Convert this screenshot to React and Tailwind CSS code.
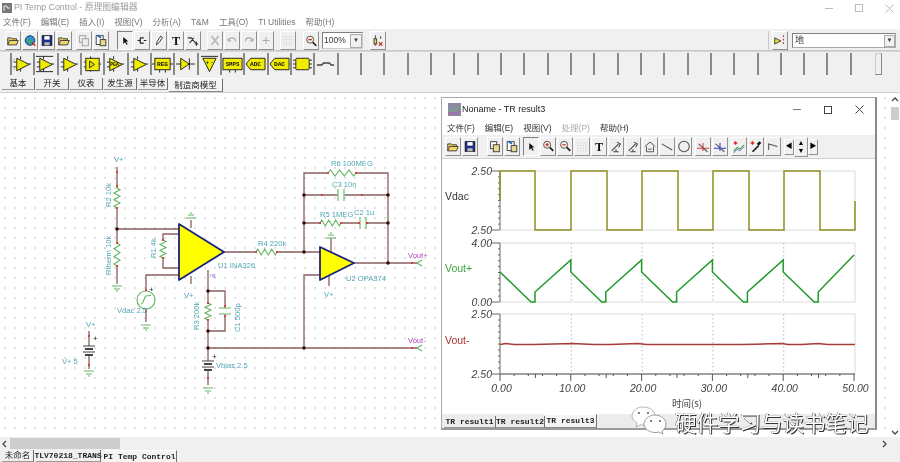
import React from 'react';

const FONT = '"Liberation Sans", "Noto Sans CJK SC", sans-serif';
const MONO = '"Liberation Mono", "Noto Sans CJK SC", monospace';

const MENU = ['文件(F)', '编辑(E)', '插入(I)', '视图(V)', '分析(A)', 'T&M', '工具(O)', 'TI Utilities', '帮助(H)'];
const PLOT_MENU = [['文件(F)', true], ['编辑(E)', true], ['视图(V)', true], ['处理(P)', false], ['帮助(H)', true]];
const PARTS = ['amp', 'diff', 'amp', 'box', 'pga', 'amp', 'reg', 'diode', 'tri', 'smps', 'adc', 'dac', 'chip', 'line'];
const PART_TEXT = { reg: 'REG', smps: 'SMPS', adc: 'ADC', dac: 'DAC', pga: 'PGA' };

function Glyph({ name }) {
  switch (name) {
    case 'open':
      return (<g stroke="#333" strokeWidth="1"><path d="M2 13V5h4l1 1h5v2" fill="#e8c85a" /><path d="M2 13l2-5h10l-2 5z" fill="#f0d668" /></g>);
    case 'globe':
      return (<g><circle cx="8" cy="8" r="5.5" fill="#2f8fd8" stroke="#135" /><path d="M4 5c3 0 3 3 5 3s1 4-1 5" fill="#3fae4a" /><path d="M10 10l4 4" stroke="#c33" strokeWidth="2" /></g>);
    case 'save':
      return (<g><rect x="2.5" y="2.5" width="11" height="11" fill="#1d2f8f" stroke="#111" /><rect x="5" y="3" width="6" height="4" fill="#fff" /><rect x="5" y="10" width="6" height="3.5" fill="#bbb" /></g>);
    case 'copy':
      return (<g stroke="#999" fill="#eee"><rect x="3" y="2.5" width="7" height="8" /><rect x="6" y="6" width="7" height="8" /></g>);
    case 'copyOn':
      return (<g stroke="#333"><rect x="3" y="2.5" width="7" height="8" fill="#fff" /><rect x="6" y="6" width="7" height="8" fill="#e8d890" /></g>);
    case 'paste':
      return (<g stroke="#333"><rect x="2.5" y="2.5" width="8" height="10" fill="#fff" /><rect x="7" y="7" width="6.5" height="7" fill="#e8d890" /><path d="M4 2l4 3" stroke="#16c" strokeWidth="2" /></g>);
    case 'arrow':
      return <path d="M6 4l0 8 2-2 2 3 1-1-2-3h3z" fill="#111" />;
    case 'wire':
      return <path d="M3 8h3M6 5v6M6 5h4M6 11h4M10 8h3" stroke="#222" strokeWidth="1.4" fill="none" />;
    case 'pencil':
      return <path d="M5 13l1-4 4-6 2 1.500-4 6z" fill="#fff" stroke="#222" />;
    case 'T':
      return <text x="8" y="13" textAnchor="middle" fontFamily='"Liberation Serif", serif' fontWeight="700" fontSize="14" fill="#111">T</text>;
    case 'part':
      return <path d="M2 5h4l5 6M9 5l-5 6M12 9v5M10 12h4" stroke="#333" strokeWidth="1.200" fill="none" />;
    case 'x':
      return <path d="M4 3l8 10M12 3L4 13" stroke="#bbb" strokeWidth="2" fill="none" />;
    case 'undo':
      return <path d="M4 9a4 4 0 018 0M4 9l-1-3M4 9l3-1" stroke="#aaa" strokeWidth="1.200" fill="none" />;
    case 'redo':
      return <path d="M4 9a4 4 0 018 0M12 9l1-3M12 9l-3-1" stroke="#aaa" strokeWidth="1.200" fill="none" />;
    case 'plus':
      return <path d="M8 4v8M4 8h8" stroke="#aaa" strokeWidth="1.200" />;
    case 'grid':
      return <path d="M3 4h10M3 7h10M3 10h10M3 13h10" stroke="#bbb" strokeWidth="1" strokeDasharray="1 2" />;
    case 'zoom':
      return (<g><circle cx="7" cy="7" r="4" fill="#f6f0e0" stroke="#444" /><path d="M5 7h4" stroke="#c22" strokeWidth="1.500" /><path d="M10 10l4 4" stroke="#222" strokeWidth="2" /></g>);
    case 'zoomIn':
      return (<g><circle cx="7" cy="6" r="4" fill="#f6f0e0" stroke="#444" /><path d="M5 6h4M7 4v4" stroke="#c22" strokeWidth="1.300" /><path d="M10 9l4 4" stroke="#222" strokeWidth="2" /></g>);
    case 'zoomOut':
      return (<g><circle cx="7" cy="6" r="4" fill="#f6f0e0" stroke="#444" /><path d="M5 6h4" stroke="#c22" strokeWidth="1.300" /><path d="M10 9l4 4" stroke="#222" strokeWidth="2" /></g>);
    case 'probe':
      return (<g stroke="#333" fill="none"><path d="M5 2v12M11 3v3" /><rect x="3.500" y="6" width="3" height="6" fill="#e8d44a" /><path d="M9 10l4 4M13 10l-4 4" stroke="#c33" strokeWidth="1.300" /></g>);
    case 'port':
      return (<g stroke="#333"><path d="M2 5l7 3.500-7 3.500z" fill="#dfe020" /><path d="M12 2v12" stroke="#c33" strokeWidth="1.400" strokeDasharray="2 2" /></g>);
    case 'cursorPlot':
      return <path d="M3 13l8-8M9 3l4 2-2 4M5 14h6M8 11v3" stroke="#444" strokeWidth="1.200" fill="none" />;
    case 'house':
      return <path d="M2 8l6-5 6 5M4 8v6h8V8M6 11h4" stroke="#444" strokeWidth="1" fill="none" />;
    case 'slash':
      return <path d="M2 5l12 7" stroke="#555" strokeWidth="1.200" />;
    case 'circle':
      return <circle cx="8" cy="8" r="6" stroke="#555" strokeWidth="1.200" fill="none" />;
    case 'cursorA':
      return (<g strokeWidth="1.200" fill="none"><path d="M1 10h14M8 4v9" stroke="#e33" /><path d="M3 5l10 9" stroke="#555" /></g>);
    case 'cursorB':
      return (<g strokeWidth="1.200" fill="none"><path d="M1 10h14M8 4v9" stroke="#33d" /><path d="M3 5l10 9" stroke="#555" /></g>);
    case 'traces':
      return (<g fill="none" strokeWidth="1.200"><path d="M2 4h4M4 2v4" stroke="#d22" strokeWidth="1.600" /><path d="M2 13l4-4 3 2 5-5" stroke="#3a3" /><path d="M2 15l4-4 3 2 5-5" stroke="#88d" /></g>);
    case 'dropper':
      return (<g fill="none"><path d="M2 4h4M4 2v4" stroke="#d22" strokeWidth="1.600" /><path d="M4 14l7-7" stroke="#222" strokeWidth="2" /><path d="M10 6l3-3" stroke="#111" strokeWidth="3" /></g>);
    case 'corner':
      return <path d="M3 12V5l10 3" stroke="#555" strokeWidth="1.200" fill="none" />;
    default:
      return null;
  }
}

function Btn({ icon, className = '', pressed = false }) {
  const edge = pressed
    ? 'border-t-[#808080] border-l-[#808080] border-r-white border-b-white'
    : 'border-t-white border-l-white border-r-[#909090] border-b-[#909090]';
  return (
    <div className={`w-[16px] h-[19px] shrink-0 flex items-center justify-center border bg-[#f0f0f0] ${edge} ${className}`}>
      <svg width="15" height="15" viewBox="0 0 16 16"><Glyph name={icon} /></svg>
    </div>
  );
}

function Part({ kind }) {
  const text = PART_TEXT[kind];
  const pins = <path d="M2 8h3M2 13h3M17 10h3M9 2v3M9 15v3" stroke="#222" strokeWidth="1" />;
  return (
    <svg width="21" height="20" viewBox="0 0 22 20">
      {(kind === 'amp' || kind === 'pga' || kind === 'diff') && (
        <g>{pins}<path d="M5 4l13 6.500L5 17z" fill="#f2ec00" stroke="#222" /></g>
      )}
      {kind === 'diff' && <path d="M1 2h18M1 18h18" stroke="#222" />}
      {kind === 'box' && (
        <g>{pins}<rect x="4" y="4" width="14" height="13" fill="#f2ec00" stroke="#222" /><path d="M8 7l5 3.500-5 3.500z" fill="none" stroke="#222" /></g>
      )}
      {kind === 'diode' && (
        <g><path d="M1 10h20" stroke="#222" /><path d="M6 4l9 6-9 6z" fill="#f2ec00" stroke="#222" /><path d="M15 4v12" stroke="#222" /></g>
      )}
      {kind === 'tri' && (
        <g><path d="M2 2h18" stroke="#222" /><path d="M4 4h14l-7 14z" fill="#f2ec00" stroke="#222" /></g>
      )}
      {kind === 'reg' && (
        <g><path d="M0 10h3M19 10h3M8 16v3M14 16v3" stroke="#222" /><rect x="3" y="4" width="16" height="12" fill="#f2ec00" stroke="#222" /></g>
      )}
      {kind === 'smps' && (
        <g><path d="M8 16v3M14 16v3" stroke="#222" /><rect x="1" y="4" width="20" height="12" fill="#f2ec00" stroke="#222" /></g>
      )}
      {(kind === 'adc' || kind === 'dac') && (
        <g><path d="M1 10l5-6h15v12H6z" fill="#f2ec00" stroke="#222" /></g>
      )}
      {kind === 'chip' && (
        <g><path d="M1 6h3M1 10h3M1 14h3M18 6h3M18 10h3M18 14h3" stroke="#222" /><rect x="4" y="4" width="14" height="12" rx="1" fill="#f2ec00" stroke="#222" /></g>
      )}
      {kind === 'line' && <path d="M2 11h5l2-2h6l2 2h3" stroke="#444" strokeWidth="1.500" fill="none" />}
      {text && (
        <text x={kind === 'pga' ? 10 : 11} y="12.500" textAnchor="middle" fontFamily='"Liberation Mono", monospace' fontWeight="700" fontSize={kind === 'smps' ? 6 : kind === 'pga' ? 5 : 6.500} fill="#111">{text}</text>
      )}
      {kind === 'tri' && <text x="11" y="10" textAnchor="middle" fontSize="6" fontWeight="700" fill="#111" fontFamily='"Liberation Sans", sans-serif'>+ -</text>}
    </svg>
  );
}

function Tab({ label, width, active = false, mono = false }) {
  return (
    <div
      style={{ fontFamily: mono ? MONO : FONT, width }}
      className={`shrink-0 flex items-center justify-center whitespace-nowrap text-[#222] border-r border-r-[#707070] ${mono ? 'text-[8px] font-bold' : 'text-[8.5px]'} ${active ? 'h-[14px] border-t border-t-white bg-[#f4f4f4] border-b border-b-[#888]' : 'h-[12px] border-b border-b-[#999]'}`}
    >
      {label}
    </div>
  );
}

// schematic helpers
const WIRE = '#8a5f5f';
const COMP = '#62b562';
const LABEL = '#4fa6b4';

function zigV(x, y, len) {
  const n = 6;
  const step = len / n;
  let d = `M${x} ${y}`;
  for (let i = 0; i < n; i++) d += `L${x + (i % 2 ? -3 : 3)} ${y + step * (i + 0.5)}`;
  return `${d}L${x} ${y + len}`;
}

function zigH(x, y, len) {
  const n = 6;
  const step = len / n;
  let d = `M${x} ${y}`;
  for (let i = 0; i < n; i++) d += `L${x + step * (i + 0.5)} ${y + (i % 2 ? 3 : -3)}`;
  return `${d}L${x + len} ${y}`;
}

const WIRES = [
  'M117 167V188M117 208V243M117 266V284',
  'M117 229H179M179 234H163V240M163 258V268H179',
  'M179 275H146V291M146 309V322',
  'M224 252H256M277 252H320',
  'M191 228V220M191 276V284',
  'M208 270V303M208 320V361M208 291H225V306M225 316V331H208M208 331',
  'M208 348H417M304 348V275H320',
  'M304 252V173H328M356 173H388V263',
  'M304 195H337M345 195H388',
  'M304 223H320M341 223H359M367 223H388',
  'M354 263H417',
  'M331 238V252M329 276V286',
  'M208 371V385',
  'M89 331V346M89 355V369',
];
const JOINTS = [[117, 229], [208, 291], [208, 331], [208, 348], [304, 348], [304, 252], [304, 195], [388, 195], [304, 223], [388, 223], [388, 263]];
const GROUNDS = [[117, 286], [191, 218, true], [146, 325], [208, 388], [89, 371], [331, 238, true]];
const PINS = [[117, 172], [117, 186], [117, 208], [117, 243], [117, 266], [163, 240], [163, 258], [146, 290], [146, 311], [208, 303], [208, 320], [225, 306], [225, 316], [89, 336], [89, 365], [208, 378], [256, 252], [277, 252], [328, 173], [356, 173], [320, 223], [341, 223], [359, 223], [367, 223], [322, 195], [362, 195], [412, 263], [412, 348]];
const TEXTS = [
  { t: 'V+', x: 114, y: 162 },
  { t: 'V+', x: 184, y: 298 },
  { t: 'V+', x: 324, y: 297 },
  { t: 'V+', x: 86, y: 327 },
  { t: 'V+ 5', x: 62, y: 364 },
  { t: 'Vdac 2.5', x: 117, y: 313 },
  { t: 'Vbias 2.5', x: 216, y: 368 },
  { t: 'U1 INA326', x: 218, y: 268 },
  { t: 'U2 OPA374', x: 346, y: 281 },
  { t: 'R4 220k', x: 258, y: 246 },
  { t: 'R6 100MEG', x: 331, y: 166 },
  { t: 'C3 10n', x: 332, y: 187 },
  { t: 'R5 1MEG', x: 320, y: 217 },
  { t: 'C2 1u', x: 354, y: 215 },
];
const VTEXTS = [
  { t: 'R2 10k', x: 111, y: 207 },
  { t: 'Rtherm 10k', x: 111, y: 275 },
  { t: 'R1 4k', x: 156, y: 258 },
  { t: 'R3 200k', x: 199, y: 330 },
  { t: 'C1 500p', x: 240, y: 332 },
];

function Ground({ x, y, up }) {
  const s = up ? -1 : 1;
  return (
    <path d={`M${x - 5} ${y}H${x + 5}M${x - 3} ${y + 3 * s}H${x + 3}M${x - 1} ${y + 5 * s}H${x + 1}`} stroke={COMP} strokeWidth="1" />
  );
}

function Battery({ x, y }) {
  return (
    <g stroke="#444">
      <path d={`M${x - 6} ${y}H${x + 6}M${x - 6} ${y + 6}H${x + 6}`} strokeWidth="1" />
      <path d={`M${x - 4} ${y + 3}H${x + 4}M${x - 4} ${y + 9}H${x + 4}`} strokeWidth="2" />
    </g>
  );
}

function Schematic() {
  return (
    <svg width="890" height="344" viewBox="0 93 890 344" className="absolute left-0 top-0">
      <g fill="none" stroke={WIRE} strokeWidth="1.300">
        {WIRES.map((d, i) => <path key={i} d={d} />)}
      </g>
      <g fill="none" stroke={COMP} strokeWidth="1.100">
        <path d={zigV(117, 188, 20)} />
        <path d={zigV(117, 243, 23)} />
        <path d={zigV(163, 240, 18)} />
        <path d={zigV(208, 303, 17)} />
        <path d={zigH(256, 252, 21)} />
        <path d={zigH(328, 173, 28)} />
        <path d={zigH(320, 223, 21)} />
        <path d="M219 308H231M219 314H231M225 306V308M225 314V316" />
        <path d="M337 195H338M338 189V201M344 189V201M344 195H345" />
        <path d="M359 223H360M360 217V229M366 217V229M366 223H367" />
        <circle cx="146" cy="300" r="9" />
        <path d="M141 304c3 0 3-8 5-8s3 0 5-1" />
        <path d="M417 263l5-3M417 263l5 3M417 348l5-3M417 348l5 3" stroke="#62b562" />
      </g>
      {GROUNDS.map(([x, y, up], i) => <Ground key={i} x={x} y={y} up={up} />)}
      <Battery x={89} y={346} />
      <Battery x={208} y={361} />

      <path d="M179 224V280L224 252Z" fill="#ffff00" stroke="#1a237e" strokeWidth="1.800" strokeLinejoin="round" />
      <path d="M320 247V280L354 263Z" fill="#ffff00" stroke="#1a237e" strokeWidth="1.800" strokeLinejoin="round" />
      <text x="210" y="277" fontSize="5" fill="#7a6fd0" fontFamily="Liberation Sans, sans-serif">ng</text>

      <g fill="#d9423a">
        {PINS.map(([x, y], i) => <rect key={i} x={x - 1} y={y - 1} width="2" height="2" />)}
      </g>
      <g fill="#330d0d">
        {JOINTS.map(([x, y], i) => <circle key={i} cx={x} cy={y} r="1.800" />)}
      </g>
      <g fill="#222" fontSize="8" fontFamily="Liberation Sans, sans-serif">
        <text x="149" y="292">+</text>
        <text x="93" y="341">+</text>
        <text x="212" y="359">+</text>
      </g>
      <g fill={LABEL} fontSize="7.600" fontFamily="Liberation Sans, sans-serif">
        {TEXTS.map((l) => <text key={l.t + l.x} x={l.x} y={l.y}>{l.t}</text>)}
        {VTEXTS.map((l) => <text key={l.t} transform={`translate(${l.x} ${l.y}) rotate(-90)`}>{l.t}</text>)}
      </g>
      <g fill="#b04ab8" fontSize="7.600" fontFamily="Liberation Sans, sans-serif">
        <text x="408" y="258">Vout+</text>
        <text x="408" y="343">Vout-</text>
      </g>
    </svg>
  );
}

// plot area, coordinates are local to the svg
const X0 = 58;
const X_STEP = 70.8;
const SQUARE = '58,42 58,12 93,12 93,71 129,71 129,12 165,12 165,71 200,71 200,12 236,12 236,71 271,71 271,12 307,12 307,71 342,71 342,12 378,12 378,71 413,71 413,42';
const RAMP = [];
RAMP.push([58, 113]);
for (let i = 0; i < 5; i++) {
  const b = 58 + i * 70.8;
  RAMP.push([b + 31, 143], [b + 35, 143], [b + 35, 133], [b + 70.8, 101 - (i === 4 ? 5 : 0)], [b + 70.8, 113]);
}
RAMP.pop();
const RAMP_POINTS = RAMP.map((p) => p.join(',')).join(' ');
const NOISE = [58, 64, 72, 92, 130, 152, 168, 196, 204, 300, 340, 346, 360, 376, 386, 413];
const FLAT = NOISE.map((x, i) => `${x},${i % 3 === 1 ? 184.5 : 185.5}`).join(' ');

function Axis({ top, bottom, label, hi, lo, color, labelY }) {
  const ticks = [];
  const n = 10;
  for (let i = 0; i <= n; i++) ticks.push(top + ((bottom - top) * i) / n);
  return (
    <g>
      <path d={`M${X0} ${top}H413V${bottom}H${X0}`} fill="none" stroke="#dcdcdc" strokeWidth="1" />
      <path d={`M${X0} ${top}V${bottom}`} stroke="#666" strokeWidth="1" />
      {ticks.map((y, i) => (
        <path key={i} d={`M${i % 10 === 0 ? X0 - 8 : X0 - 2} ${y}H${X0}`} stroke="#666" strokeWidth="1" />
      ))}
      <text x={X0 - 8} y={top + 4} textAnchor="end" fontSize="10.500" fontStyle="italic" fill="#444">{hi}</text>
      <text x={X0 - 8} y={bottom + 4} textAnchor="end" fontSize="10.500" fontStyle="italic" fill="#444">{lo}</text>
      <text x="3" y={labelY} fontSize="10.500" fill={color}>{label}</text>
    </g>
  );
}

function PlotChart() {
  const xs = [0, 1, 2, 3, 4, 5].map((i) => X0 + i * X_STEP + 0.5);
  return (
    <svg width="435" height="257" viewBox={`0 0 435 257`} className="block" fontFamily="Liberation Sans, sans-serif">
      <Axis top={12} bottom={71} hi="2.50" lo="2.50" label="Vdac" color="#333" labelY={41} />
      <Axis top={84} bottom={143} hi="4.00" lo="0.00" label="Vout+" color="#3fa03f" labelY={113} />
      <Axis top={155} bottom={215} hi="2.50" lo="2.50" label="Vout-" color="#a33" labelY={185} />
      {xs.slice(1, 5).map((x) => (
        <path key={x} d={`M${x} 84V143M${x} 155V215`} stroke="#bbb" strokeDasharray="1.500 2.500" />
      ))}
      <path d={`M${X0} 215H413`} stroke="#555" />
      {Array.from({ length: 51 }, (_, i) => i).filter((i) => i % 2 === 0 || i % 5 === 0).map((i) => (
        <path key={i} d={`M${X0 + (i * X_STEP) / 10} 215v${i % 10 === 0 ? 7 : i % 5 === 0 ? 4 : 2}`} stroke="#555" />
      ))}
      {xs.map((x, i) => (
        <text key={x} x={x + 1} y="233" textAnchor="middle" fontSize="10.500" fontStyle="italic" fill="#444">{`${i * 10}.00`}</text>
      ))}
      <polyline points={SQUARE} fill="none" stroke="#8f8f22" strokeWidth="1.500" />
      <polyline points={RAMP_POINTS} fill="none" stroke="#1f9a2a" strokeWidth="1.500" />
      <polyline points={FLAT} fill="none" stroke="#a83a3a" strokeWidth="1.500" />
      <text x="245" y="248" textAnchor="middle" fontSize="9.500" fill="#444" fontFamily='"Noto Sans CJK SC", sans-serif'>时间(s)</text>
    </svg>
  );
}

function PlotWindow() {
  return (
    <div style={{ fontFamily: FONT }} className="absolute left-[441px] top-[4px] w-[436px] h-[333px] flex flex-col bg-white border border-[#a8a8a8] border-r-2 border-r-[#8a8a8a] border-b-2 border-b-[#9a9a9a]">
      <div className="h-[23px] shrink-0 flex items-center pl-[6px] text-[9px] text-[#222]">
        <svg width="13" height="13" viewBox="0 0 13 13" className="mr-[1px]">
          <rect width="13" height="13" fill="#8a8aa0" />
          <path d="M0 9l4-3 3 2 6-5" stroke="#5fc05f" fill="none" />
          <path d="M0 11l4-2 3 2 6-3" stroke="#c050c0" fill="none" />
        </svg>
        <span>Noname - TR result3</span>
        <div className="ml-auto flex items-center gap-[23px] pr-[11px] text-[#333]">
          <div className="w-[8px] h-px bg-[#777]" />
          <div className="w-[8px] h-[8px] border border-[#444]" />
          <svg width="9" height="9" viewBox="0 0 9 9"><path d="M0.500 0.500l8 8M8.500 0.500l-8 8" stroke="#444" /></svg>
        </div>
      </div>
      <div className="h-[14px] shrink-0 flex items-center text-[8.5px] pl-[5px] gap-[10px] text-[#333]">
        {PLOT_MENU.map(([label, on]) => (
          <span key={label} className={on ? '' : 'text-[#aaa]'}>{label}</span>
        ))}
      </div>
      <div className="h-[24px] shrink-0 flex items-center bg-[#f0f0f0] pl-[3px] border-b border-[#d0d0d0]">
        <Btn icon="open" /><Btn icon="save" className="ml-px" />
        <Btn icon="copyOn" className="ml-[9px]" /><Btn icon="paste" className="ml-px" />
        <Btn icon="arrow" pressed className="ml-[3px]" /><Btn icon="zoomIn" className="ml-px" /><Btn icon="zoomOut" className="ml-px" />
        <Btn icon="grid" className="ml-px" /><Btn icon="T" className="ml-px" /><Btn icon="cursorPlot" className="ml-px" />
        <Btn icon="cursorPlot" className="ml-px" /><Btn icon="house" className="ml-px" /><Btn icon="slash" className="ml-px" />
        <Btn icon="circle" className="ml-px" />
        <Btn icon="cursorA" className="ml-[3px]" /><Btn icon="cursorB" className="ml-px" />
        <Btn icon="traces" className="ml-[3px]" /><Btn icon="dropper" className="ml-px" /><Btn icon="corner" className="ml-px" />
        <div className="ml-[3px] flex items-center">
          <div className="w-[10px] h-[16px] border border-t-white border-l-white border-r-[#909090] border-b-[#909090] flex items-center justify-center text-[7px]">◀</div>
          <div className="w-[14px] h-[20px] border border-t-white border-l-white border-r-[#909090] border-b-[#909090] flex flex-col items-center justify-center text-[7px] leading-[8px]"><span>▲</span><span>▼</span></div>
          <div className="w-[10px] h-[16px] border border-t-white border-l-white border-r-[#909090] border-b-[#909090] flex items-center justify-center text-[7px]">▶</div>
        </div>
      </div>
      <div className="flex-1 min-h-0 relative">
        <PlotChart />
      </div>
      <div className="h-[14px] shrink-0 flex items-end bg-[#ececec] pl-[2px]">
        <Tab label="TR result1" width={52} mono />
        <Tab label="TR result2" width={49} mono />
        <Tab label="TR result3" width={52} mono active />
      </div>
    </div>
  );
}

export default function App() {
  const cells = Array.from({ length: 37 }, (_, i) => PARTS[i] || null);
  return (
    <div style={{ fontFamily: FONT }} className="relative w-[900px] h-[462px] flex flex-col overflow-hidden bg-white blur-[0.35px]">
      {/* title + menu */}
      <div className="h-[16px] shrink-0 flex items-center pl-[1px] text-[8.8px] text-[#9a9a9a]">
        <svg width="12" height="12" viewBox="0 0 12 12" className="mr-[1px]">
          <rect x="1" y="1" width="10" height="10" fill="#777" />
          <path d="M3 9V4h3v2h3" stroke="#eee" fill="none" />
        </svg>
        <span>PI Temp Control - 原理图编辑器</span>
        <div className="ml-auto flex items-center gap-[22px] pr-[6px]">
          <div className="w-[8px] h-px bg-[#bbb]" />
          <div className="w-[8px] h-[8px] border border-[#bbb]" />
          <svg width="9" height="9" viewBox="0 0 9 9"><path d="M0.500 0.500l8 8M8.500 0.500l-8 8" stroke="#bbb" /></svg>
        </div>
      </div>
      <div className="h-[13px] shrink-0 flex items-center pl-[3px] gap-[10px] text-[8.5px] text-[#777]">
        {MENU.map((m) => <span key={m}>{m}</span>)}
      </div>

      {/* main toolbar */}
      <div className="h-[22px] shrink-0 flex items-center bg-[#f0f0f0] pl-[5px] pt-[2px] border-b border-[#c8c8c8]">
        <Btn icon="open" /><Btn icon="globe" className="ml-px" /><Btn icon="save" className="ml-px" /><Btn icon="open" className="ml-px" />
        <Btn icon="copy" className="ml-[4px]" /><Btn icon="paste" className="ml-px" />
        <Btn icon="arrow" pressed className="ml-[8px]" /><Btn icon="wire" className="ml-px" /><Btn icon="pencil" className="ml-px" /><Btn icon="T" className="ml-px" /><Btn icon="part" className="ml-px" />
        <Btn icon="x" className="ml-[6px]" /><Btn icon="undo" className="ml-px" /><Btn icon="redo" className="ml-px" /><Btn icon="plus" className="ml-px" />
        <Btn icon="grid" className="ml-[6px]" />
        <Btn icon="zoom" className="ml-[7px]" />
        <div className="ml-[3px] w-[41px] h-[17px] flex items-center justify-between bg-white border border-t-[#808080] border-l-[#808080] border-r-[#ccc] border-b-[#ccc] pl-[1px] text-[8.5px] text-[#333]">
          100%
          <div className="w-[12px] h-[14px] flex items-center justify-center bg-[#f0f0f0] border border-[#aaa] text-[6px]">▼</div>
        </div>
        <Btn icon="probe" className="ml-[7px]" />
        <div className="ml-auto flex items-center pr-[4px]">
          <div className="w-px h-[20px] bg-[#c8c8c8] mr-[3px]" />
          <Btn icon="port" />
          <div className="ml-[4px] w-[104px] h-[15px] flex items-center justify-between bg-white border border-t-[#808080] border-l-[#808080] border-r-[#aaa] border-b-[#aaa] pl-[2px] text-[9px] text-[#333]">
            地
            <div className="w-[11px] h-[12px] flex items-center justify-center bg-[#f0f0f0] border border-[#aaa] text-[6px]">▼</div>
          </div>
        </div>
      </div>

      {/* component palette */}
      <div className="h-[25px] shrink-0 flex items-center bg-[#f0f0f0] pl-[3px] border-t border-[#d8d8d8]">
        <div className="w-[7px] text-[#bbb] text-[13px] leading-none">〈</div>
        {cells.map((kind, i) => (
          <div key={i} className="w-[23.33px] h-[22px] shrink-0 flex items-center justify-center border-l-2 border-[#8a8a8a]">
            {kind && <Part kind={kind} />}
          </div>
        ))}
        <div className="ml-[2px] w-[7px] h-[22px] border border-[#ccc] border-r-[#888] border-b-[#888]" />
      </div>

      {/* palette tabs */}
      <div className="h-[17px] shrink-0 flex items-start bg-[#f0f0f0] pl-[2px] pt-[2px] gap-px border-b border-[#cfcfcf]">
        <Tab label="基本" width={33} />
        <Tab label="开关" width={33} />
        <Tab label="仪表" width={33} />
        <Tab label="发生源" width={33} />
        <Tab label="半导体" width={30} />
        <Tab label="制造商模型" width={54} active />
      </div>

      {/* canvas */}
      <div className="relative flex-1 min-h-0 flex">
        <div className="relative flex-1 bg-white bg-[radial-gradient(#dedede_0.7px,transparent_0.9px)] bg-[length:10px_10px]">
          <Schematic />
        </div>
        <div className="w-[10px] shrink-0 flex flex-col items-center bg-white text-[#555]">
          <svg width="8" height="8" viewBox="0 0 8 8" className="mt-[3px]"><path d="M1 5l3-3 3 3" stroke="#444" fill="none" strokeWidth="1.300" /></svg>
          <div className="w-[8px] h-[13px] mt-[3px] bg-[#cdcdcd]" />
          <svg width="8" height="8" viewBox="0 0 8 8" className="mt-auto mb-[1px]"><path d="M1 3l3 3 3-3" stroke="#444" fill="none" strokeWidth="1.300" /></svg>
        </div>
        <PlotWindow />
      </div>

      {/* horizontal scrollbar */}
      <div className="h-[13px] shrink-0 flex items-center bg-[#f0f0f0]">
        <svg width="8" height="8" viewBox="0 0 8 8" className="ml-[1px]"><path d="M5 1L2 4l3 3" stroke="#444" fill="none" strokeWidth="1.300" /></svg>
        <div className="ml-px w-[110px] h-[11px] bg-[#cdcdcd]" />
        <svg width="8" height="8" viewBox="0 0 8 8" className="ml-auto mr-[12px]"><path d="M3 1l3 3-3 3" stroke="#444" fill="none" strokeWidth="1.300" /></svg>
      </div>

      {/* sheet tabs */}
      <div className="h-[12px] shrink-0 flex items-start bg-[#f0f0f0] pl-[2px] gap-[2px] overflow-hidden">
        <Tab label="未命名" width={32} />
        <Tab label="TLV70218_TRANS" width={65} mono />
        <Tab label="PI Temp Control" width={74} mono active />
      </div>

      {/* wechat watermark */}
      <div className="absolute left-[631px] top-[406px] flex items-center">
        <svg width="38" height="32" viewBox="0 0 38 32" className="mr-[6px]">
          <path d="M12 1c7 0 12 4 12 9s-5 9-12 9c-1 0-2 0-3-.3L5 21l1-4c-3-2-5-4-5-7 0-5 5-9 11-9z" fill="#fff" stroke="#999" strokeWidth="0.700" />
          <path d="M24 9c6 0 11 4 11 9 0 3-1.500 5-4 7l1 3-4-2c-1 .3-3 .5-4 .5-6 0-11-4-11-8.500S18 9 24 9z" fill="#fff" stroke="#777" strokeWidth="0.700" />
          <circle cx="8" cy="7" r="1" fill="#555" /><circle cx="17" cy="7" r="1" fill="#555" />
          <circle cx="20" cy="15" r="1" fill="#555" /><circle cx="29" cy="15" r="1" fill="#555" />
        </svg>
        <span
          style={{ fontFamily: '"Noto Sans CJK SC", sans-serif' }}
          className="text-[21.5px] leading-none text-white whitespace-nowrap [text-shadow:1px_1px_0_#333,-0.5px_-0.5px_0_#555]"
        >
          硬件学习与读书笔记
        </span>
      </div>
    </div>
  );
}
